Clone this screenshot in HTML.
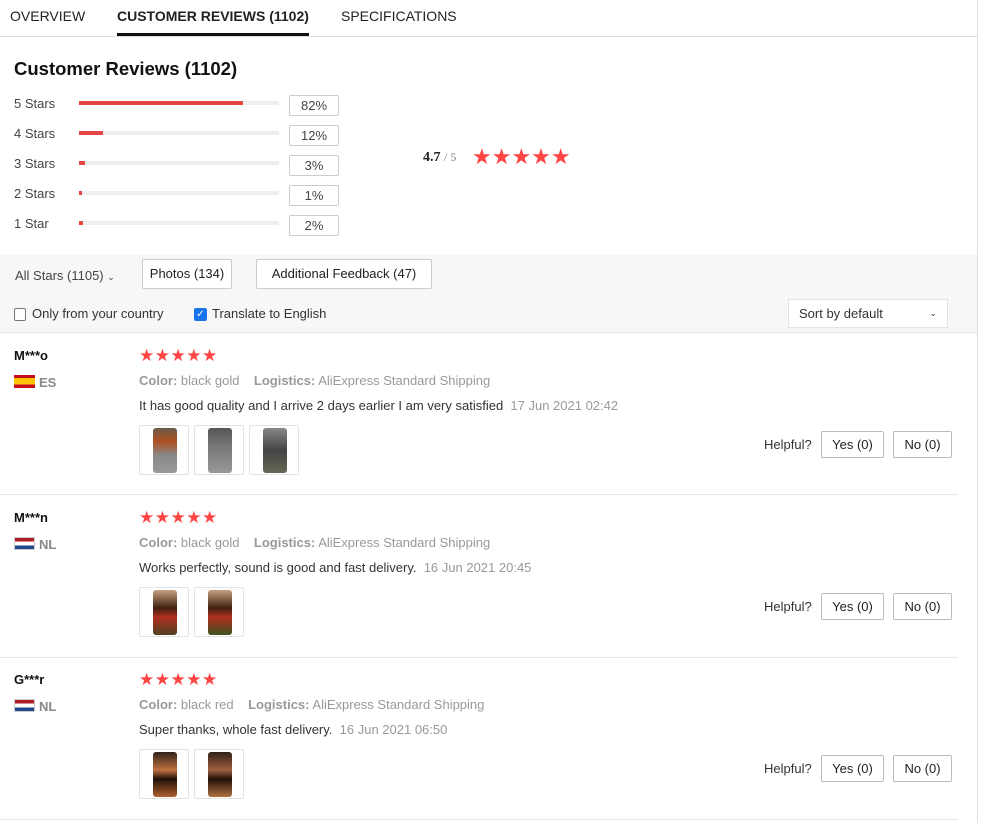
<!DOCTYPE html>
<html><head><meta charset="utf-8"><style>
*{box-sizing:border-box;margin:0;padding:0}
body{width:982px;height:823px;overflow:hidden;background:#fff;font-family:"Liberation Sans",Arial,sans-serif;color:#333;position:relative}
.a{position:absolute}
.tab{font-size:14px;top:8px;color:#222}
.bar{position:absolute;left:79px;width:200px;height:4px;background:#eee}
.bar i{display:block;height:4px;background:#e64545}
.lbl{position:absolute;left:14px;font-size:13px;color:#444}
.pct{position:absolute;left:289px;width:50px;height:21px;border:1px solid #ccc;border-radius:2px;font-size:13px;text-align:center;line-height:19px;color:#444}
.btn{position:absolute;border:1px solid #bbb;border-radius:2px;background:#fff;font-size:13px;color:#222;text-align:center}
.stars{color:#f44;font-size:17px;letter-spacing:0.5px}
.sep{position:absolute;left:0;width:958px;height:1px;background:#e5e5e5}
.ph{position:absolute;width:50px;height:50px;border:1px solid #e3e3e3;border-radius:2px;background:#fff}
.ph i{position:absolute;left:13px;top:2px;width:24px;height:45px;border-radius:3px}
.name{font-size:13px;font-weight:bold;color:#111;left:14px}
.cty{font-size:13px;color:#888;font-weight:bold;left:39px}
.meta{font-size:13px;color:#999;left:139px}
.meta b{color:#999}
.txt{font-size:13px;color:#333;left:139px}
.txt span{color:#999}
</style></head><body>
<div class="a tab" style="left:10px">OVERVIEW</div>
<div class="a tab" style="left:117px;font-weight:bold">CUSTOMER REVIEWS (1102)</div>
<div class="a tab" style="left:341px">SPECIFICATIONS</div>
<div class="a" style="left:117px;top:33px;width:192px;height:3px;background:#111"></div>
<div class="a" style="left:0;top:36px;width:978px;height:1px;background:#ddd"></div>
<div class="a" style="left:977px;top:0;width:1px;height:823px;background:#ddd"></div>
<div class="a" style="left:14px;top:58px;font-size:18.5px;font-weight:bold;color:#111">Customer Reviews (1102)</div>

<div class="lbl" style="top:96px">5 Stars</div><div class="bar" style="top:101px"><i style="width:164px"></i></div><div class="pct" style="top:95px">82%</div>
<div class="lbl" style="top:126px">4 Stars</div><div class="bar" style="top:131px"><i style="width:24px"></i></div><div class="pct" style="top:125px">12%</div>
<div class="lbl" style="top:156px">3 Stars</div><div class="bar" style="top:161px"><i style="width:6px"></i></div><div class="pct" style="top:155px">3%</div>
<div class="lbl" style="top:186px">2 Stars</div><div class="bar" style="top:191px"><i style="width:3px"></i></div><div class="pct" style="top:185px">1%</div>
<div class="lbl" style="top:216px">1 Star</div><div class="bar" style="top:221px"><i style="width:4px"></i></div><div class="pct" style="top:215px">2%</div>

<div class="a" style="left:423px;top:150px;font-family:'Liberation Serif',serif;font-size:14px;color:#222"><b>4.7</b> <span style="color:#888;font-size:12px">/ 5</span></div>
<div class="a stars" style="left:472px;top:144px;font-size:22px;letter-spacing:0px">★★★★★</div>

<div class="a" style="left:0;top:255px;width:977px;height:78px;background:#f7f7f7;border-bottom:1px solid #e5e5e5"></div>
<div class="a" style="left:15px;top:268px;font-size:13px;color:#444">All Stars (1105) <span style="font-size:9px">&#8964;</span></div>
<div class="btn" style="left:142px;top:259px;width:90px;height:30px;line-height:28px;border-color:#ccc">Photos (134)</div>
<div class="btn" style="left:256px;top:259px;width:176px;height:30px;line-height:28px;border-color:#ccc">Additional Feedback (47)</div>
<div class="a" style="left:14px;top:308px;width:12px;height:13px;border:1px solid #777;border-radius:2px;background:#fff"></div>
<div class="a" style="left:32px;top:306px;font-size:13px;color:#333">Only from your country</div>
<div class="a" style="left:194px;top:308px;width:13px;height:13px;background:#1a73e8;border-radius:2px;color:#fff;font-size:10px;line-height:13px;text-align:center">✓</div>
<div class="a" style="left:212px;top:306px;font-size:13px;color:#333">Translate to English</div>
<div class="a" style="left:788px;top:299px;width:160px;height:29px;background:#fff;border:1px solid #e3e3e3;font-size:13px;line-height:27px;padding-left:10px;color:#333">Sort by default<span style="position:absolute;right:10px;font-size:9px">&#8964;</span></div>

<!-- review 1 -->
<div class="a name" style="top:348px">M***o</div>
<div class="a" style="left:14px;top:375px;width:21px;height:13px;background:linear-gradient(#c60b1e 25%,#ffc400 25%,#ffc400 75%,#c60b1e 75%)"></div>
<div class="a cty" style="top:375px">ES</div>
<div class="a stars" style="left:139px;top:346px">★★★★★</div>
<div class="a meta" style="top:373px"><b>Color:</b> black gold &nbsp;&nbsp; <b>Logistics:</b> AliExpress Standard Shipping</div>
<div class="a txt" style="top:398px">It has good quality and I arrive 2 days earlier I am very satisfied &nbsp;<span>17 Jun 2021 02:42</span></div>
<div class="ph" style="left:139px;top:425px"><i style="background:linear-gradient(#6a5a4a,#b05020 30%,#888 60%,#999)"></i></div>
<div class="ph" style="left:194px;top:425px"><i style="background:linear-gradient(#555,#777 40%,#999)"></i></div>
<div class="ph" style="left:249px;top:425px"><i style="background:linear-gradient(#888,#444 50%,#665)"></i></div>
<div class="a" style="left:764px;top:437px;font-size:13px;color:#333">Helpful?</div>
<div class="btn" style="left:821px;top:431px;width:63px;height:27px;line-height:25px">Yes (0)</div>
<div class="btn" style="left:893px;top:431px;width:59px;height:27px;line-height:25px">No (0)</div>
<div class="sep" style="top:494px"></div>

<!-- review 2 -->
<div class="a name" style="top:510px">M***n</div>
<div class="a" style="left:14px;top:537px;width:21px;height:13px;background:linear-gradient(#ae1c28 33%,#fff 33%,#fff 66%,#21468b 66%);border:1px solid #ccc"></div>
<div class="a cty" style="top:537px">NL</div>
<div class="a stars" style="left:139px;top:508px">★★★★★</div>
<div class="a meta" style="top:535px"><b>Color:</b> black gold &nbsp;&nbsp; <b>Logistics:</b> AliExpress Standard Shipping</div>
<div class="a txt" style="top:560px">Works perfectly, sound is good and fast delivery. &nbsp;<span>16 Jun 2021 20:45</span></div>
<div class="ph" style="left:139px;top:587px"><i style="background:linear-gradient(#c8a080,#402010 40%,#b03020 60%,#504020)"></i></div>
<div class="ph" style="left:194px;top:587px"><i style="background:linear-gradient(#c8a080,#402010 40%,#b03020 60%,#405020)"></i></div>
<div class="a" style="left:764px;top:599px;font-size:13px;color:#333">Helpful?</div>
<div class="btn" style="left:821px;top:593px;width:63px;height:27px;line-height:25px">Yes (0)</div>
<div class="btn" style="left:893px;top:593px;width:59px;height:27px;line-height:25px">No (0)</div>
<div class="sep" style="top:657px"></div>

<!-- review 3 -->
<div class="a name" style="top:672px">G***r</div>
<div class="a" style="left:14px;top:699px;width:21px;height:13px;background:linear-gradient(#ae1c28 33%,#fff 33%,#fff 66%,#21468b 66%);border:1px solid #ccc"></div>
<div class="a cty" style="top:699px">NL</div>
<div class="a stars" style="left:139px;top:670px">★★★★★</div>
<div class="a meta" style="top:697px"><b>Color:</b> black red &nbsp;&nbsp; <b>Logistics:</b> AliExpress Standard Shipping</div>
<div class="a txt" style="top:722px">Super thanks, whole fast delivery. &nbsp;<span>16 Jun 2021 06:50</span></div>
<div class="ph" style="left:139px;top:749px"><i style="background:linear-gradient(#302018,#c07040 40%,#201008 60%,#b06030)"></i></div>
<div class="ph" style="left:194px;top:749px"><i style="background:linear-gradient(#302018,#a06040 40%,#201008 60%,#b07040)"></i></div>
<div class="a" style="left:764px;top:761px;font-size:13px;color:#333">Helpful?</div>
<div class="btn" style="left:821px;top:755px;width:63px;height:27px;line-height:25px">Yes (0)</div>
<div class="btn" style="left:893px;top:755px;width:59px;height:27px;line-height:25px">No (0)</div>
<div class="sep" style="top:819px"></div>
</body></html>
